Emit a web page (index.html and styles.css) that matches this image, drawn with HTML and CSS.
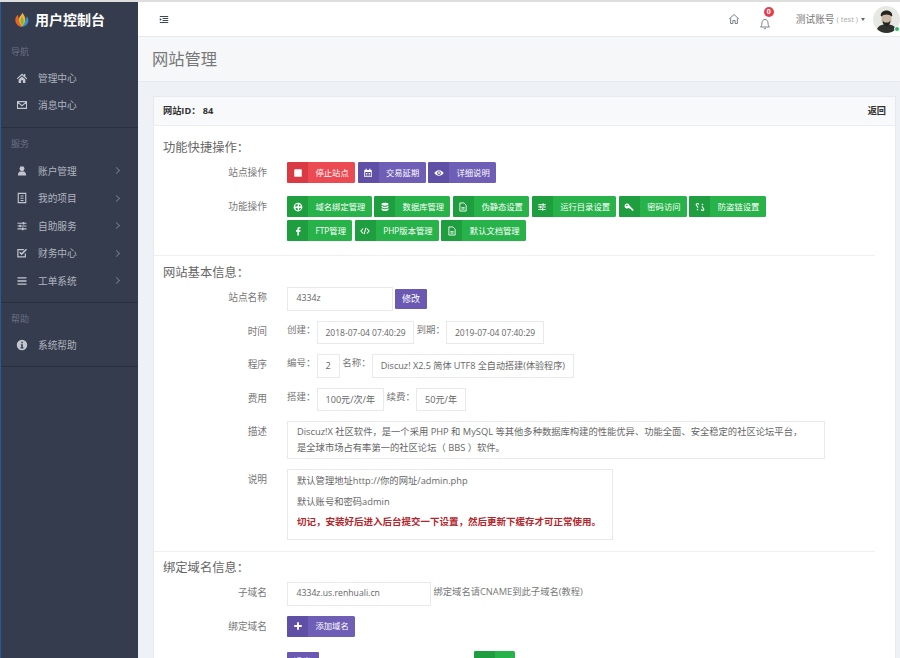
FILE: index.html
```html
<!DOCTYPE html>
<html lang="zh-CN">
<head>
    <meta charset="UTF-8">
    <title>网站管理</title>
    <link rel="stylesheet" href="styles.css">
</head>
<body>
    <svg class="sprite" xmlns="http://www.w3.org/2000/svg">
        <symbol id="i-home" viewBox="0 0 16 16"><path d="M8 2 1 8.500l1 1L8 4.200l6 5.300 1-1-2.500-2.300V2.500h-2v1.800zM3.500 10v4.500h3.300V11h2.400v3.500h3.300V10L8 6z"/></symbol>
        <symbol id="i-mail" viewBox="0 0 16 16"><path fill="none" stroke="currentColor" stroke-width="1.400" d="M2 3.500h12v9H2zM2.500 4.500 8 9l5.500-4.500"/></symbol>
        <symbol id="i-user" viewBox="0 0 16 16"><circle cx="8" cy="5" r="3.300"/><path d="M2.500 14c0-4 2-5.500 3-5.500h5c1 0 3 1.500 3 5.500z"/></symbol>
        <symbol id="i-book" viewBox="0 0 16 16"><path fill="none" stroke="currentColor" stroke-width="1.500" d="M3 1.800h10v12.400H3z"/><path d="M6 4.500h4V6H6zM6 7.500h4V9H6zM6 10.500h4V12H6z"/></symbol>
        <symbol id="i-sliders" viewBox="0 0 16 16"><path d="M2 3.500h12V5H2zM2 7.300h12v1.400H2zM2 11h12v1.500H2z"/><path d="M9 2.500h2V6H9zM4.500 6.300h2v3.500h-2zM8 10h2v3.500H8z"/></symbol>
        <symbol id="i-check" viewBox="0 0 16 16"><path fill="none" stroke="currentColor" stroke-width="1.600" d="M12.500 8.500v4.700h-10V3.500h8"/><path fill="none" stroke="currentColor" stroke-width="2" d="M5 7l2.500 2.500L14 3"/></symbol>
        <symbol id="i-bars" viewBox="0 0 16 16"><path d="M2 3h12v1.800H2zM2 7.100h12v1.800H2zM2 11.200h12V13H2z"/></symbol>
        <symbol id="i-info" viewBox="0 0 16 16"><path fill-rule="evenodd" d="M8 1a7 7 0 1 0 0 14A7 7 0 0 0 8 1zM7 3.500h2v2H7zM6.500 7H9v4h1v1.500H6V11h1V8.500h-.5z"/></symbol>
        <symbol id="i-stop" viewBox="0 0 16 16"><rect x="2" y="2" width="12" height="12" rx="1"/></symbol>
        <symbol id="i-cal" viewBox="0 0 16 16"><path fill-rule="evenodd" d="M4 1h2v2h4V1h2v2h2v11.500H2V3h2zM3.500 6.500V13h9V6.500z"/><path d="M5 8h2v1.500H5zM9 8h2v1.500H9zM5 10.500h2V12H5zM9 10.500h2V12H9z"/></symbol>
        <symbol id="i-eye" viewBox="0 0 16 16"><path fill-rule="evenodd" d="M8 3.500C4.500 3.500 2 6 .5 8 2 10 4.500 12.500 8 12.500s6-2.500 7.500-4.500C14 6 11.500 3.500 8 3.500zM8 5a3 3 0 1 1 0 6 3 3 0 0 1 0-6z"/><circle cx="8" cy="8" r="1.500"/></symbol>
        <symbol id="i-globe" viewBox="0 0 16 16"><path fill-rule="evenodd" d="M8 1a7 7 0 1 0 0 14A7 7 0 0 0 8 1zM4 4l3-1 1 2-2 2H3.500zM10 3.500l2.500 2-1 2-2.500-1zM4 9l3 .5 1 3-1.500 1-2-2zM10 9.500h3l-1.500 3-2 .5z"/></symbol>
        <symbol id="i-db" viewBox="0 0 16 16"><ellipse cx="8" cy="3.500" rx="5.500" ry="2.300"/><path d="M2.500 5.500c1 1.500 3 2 5.500 2s4.500-.5 5.500-2V8c-1 1.500-3 2-5.500 2s-4.500-.5-5.500-2zM2.500 9.500c1 1.500 3 2 5.500 2s4.500-.5 5.500-2v3c-1 1.500-3 2-5.500 2s-4.500-.5-5.500-2z"/></symbol>
        <symbol id="i-file" viewBox="0 0 16 16"><path fill="none" stroke="currentColor" stroke-width="1.400" d="M3 1.500h6.500L13 5v9.500H3z"/><path d="M5.500 8h5v1.300h-5zM5.500 10.500h5v1.300h-5z"/></symbol>
        <symbol id="i-key" viewBox="0 0 16 16"><path fill-rule="evenodd" d="M5 2.500a4 4 0 1 0 2.800 6.800L9.500 11H11v1.500h1.500V14H15v-2L8.700 5.700A4 4 0 0 0 5 2.500zM4.500 4.500a1.200 1.200 0 1 1 0 2.400 1.200 1.200 0 0 1 0-2.400z"/></symbol>
        <symbol id="i-link" viewBox="0 0 16 16"><path fill="none" stroke="currentColor" stroke-width="1.700" d="M6 4 4.500 2.500A2 2 0 0 0 2 5l3 4M10 12l1.500 1.500A2 2 0 0 0 14 11l-3-4M3 13l2-2M13 3l-2 2"/></symbol>
        <symbol id="i-fb" viewBox="0 0 16 16"><path d="M9.500 15V9h2.200l.3-2.500H9.500V5c0-.8.3-1.200 1.200-1.200H12V1.500c-.3 0-1-.1-1.800-.1C8.200 1.400 7 2.500 7 4.700v1.800H4.800V9H7v6z"/></symbol>
        <symbol id="i-code" viewBox="0 0 16 16"><path fill="none" stroke="currentColor" stroke-width="1.700" d="M5 4 1.500 8 5 12M11 4l3.500 4-3.500 4M9.500 3l-3 10"/></symbol>
        <symbol id="i-plus" viewBox="0 0 16 16"><path d="M6.500 2h3v4.500H14v3H9.500V14h-3V9.500H2v-3h4.500z"/></symbol>
    </svg>

    <div class="app">
        <aside class="sidebar">
            <div class="brand">
                <svg class="brand-logo" viewBox="0 0 20 20">
                    <path fill="#e8642b" d="M5 4C2 6 1 10 2 13c1 3 4 6 8 6-3-3-4-9-5-15z"/>
                    <path fill="#2f8fdc" d="M10 19c4 0 8-3 8-8 0-2-1-4-2-5-1 5-3 10-6 13z"/>
                    <path fill="#f2b134" d="M10 1c1 3-4 5-4 9 0 3 2 7 4 9 3-3 5-7 4-11-.5-3-3-5-4-7z"/>
                    <path fill="#7cb83f" d="M10 7c-2 2-2.500 5-1 8 .5 1 1 2 1.500 2.500 2-3 2.500-7-.5-10.500z"/>
                </svg>
                <span>用户控制台</span>
            </div>

            <section class="nav-group">
                <h4>导航</h4>
                <a class="nav-item"><svg><use href="#i-home"/></svg><span>管理中心</span></a>
                <a class="nav-item"><svg><use href="#i-mail"/></svg><span>消息中心</span></a>
            </section>
            <section class="nav-group">
                <h4>服务</h4>
                <a class="nav-item"><svg><use href="#i-user"/></svg><span>账户管理</span><i class="chev"></i></a>
                <a class="nav-item"><svg><use href="#i-book"/></svg><span>我的项目</span><i class="chev"></i></a>
                <a class="nav-item"><svg><use href="#i-sliders"/></svg><span>自助服务</span><i class="chev"></i></a>
                <a class="nav-item"><svg><use href="#i-check"/></svg><span>财务中心</span><i class="chev"></i></a>
                <a class="nav-item"><svg><use href="#i-bars"/></svg><span>工单系统</span><i class="chev"></i></a>
            </section>
            <section class="nav-group">
                <h4>帮助</h4>
                <a class="nav-item"><svg><use href="#i-info"/></svg><span>系统帮助</span></a>
            </section>
        </aside>

        <div class="main">
            <header class="topbar">
                <svg class="toggle" viewBox="0 0 12 10"><path d="M0 0h12v1.500H0zM0 8.500h12V10H0zM4 3h8v1.300H4zM4 5.700h8V7H4zM0 3l2.800 2L0 7z"/></svg>
                <div class="top-right">
                    <svg class="top-home" viewBox="0 0 16 16"><path fill="none" stroke="currentColor" stroke-width="1.200" d="M1.500 8 8 2l6.500 6M3.500 7v7h3v-4h3v4h3V7"/></svg>
                    <div class="bell">
                        <svg viewBox="0 0 16 16"><path fill="none" stroke="currentColor" stroke-width="1.200" d="M8 2C5.500 2 4 4 4 6.500c0 3-1 4.500-2 5.500h12c-1-1-2-2.500-2-5.500C12 4 10.500 2 8 2zM6.500 13.500c.3 1 2.700 1 3 0"/></svg>
                        <b class="badge">0</b>
                    </div>
                    <div class="account">测试账号<em>( test )</em><i class="caret"></i></div>
                    <div class="avatar">
                        <svg viewBox="0 0 28 28">
                            <rect width="28" height="28" fill="#e6e8e4"/>
                            <path fill="#2f3330" d="M3 28c1-7 5-9 11-9s10 2 11 9z"/>
                            <path fill="#c9b9a6" d="M9 9c0-5 10-5 10 0v6c0 3-3 5-5 5s-5-2-5-5z"/>
                            <path fill="#26241f" d="M8 10c0-7 12-7 12 0l-1 1c-1-3-9-3-10 0zM10 15c1 2 2 2 4 2s3 0 4-2c0 4-2 6-4 6s-4-2-4-6z"/>
                        </svg>
                        <i class="online"></i>
                    </div>
                </div>
            </header>

            <div class="page-title"><h1>网站管理</h1></div>

            <div class="content">
                <div class="card">
                    <div class="card-head">
                        <strong>网站ID： 84</strong>
                        <a>返回</a>
                    </div>

                    <section class="block">
                        <h3>功能快捷操作：</h3>
                        <div class="row spaced">
                            <label>站点操作</label>
                            <div class="controls">
                                <a class="btn red"><span class="ico"><svg><use href="#i-stop"/></svg></span>停止站点</a>
                                <a class="btn purple"><span class="ico"><svg><use href="#i-cal"/></svg></span>交易延期</a>
                                <a class="btn purple"><span class="ico"><svg><use href="#i-eye"/></svg></span>详细说明</a>
                            </div>
                        </div>
                        <div class="row">
                            <label>功能操作</label>
                            <div class="controls ops">
                                <a class="btn green"><span class="ico"><svg><use href="#i-globe"/></svg></span>域名绑定管理</a>
                                <a class="btn green"><span class="ico"><svg><use href="#i-db"/></svg></span>数据库管理</a>
                                <a class="btn green"><span class="ico"><svg><use href="#i-file"/></svg></span>伪静态设置</a>
                                <a class="btn green"><span class="ico"><svg><use href="#i-sliders"/></svg></span>运行目录设置</a>
                                <a class="btn green"><span class="ico"><svg><use href="#i-key"/></svg></span>密码访问</a>
                                <a class="btn green"><span class="ico"><svg><use href="#i-link"/></svg></span>防盗链设置</a>
                                <a class="btn green"><span class="ico"><svg><use href="#i-fb"/></svg></span>FTP管理</a>
                                <a class="btn green"><span class="ico"><svg><use href="#i-code"/></svg></span>PHP版本管理</a>
                                <a class="btn green"><span class="ico"><svg><use href="#i-file"/></svg></span>默认文档管理</a>
                            </div>
                        </div>
                    </section>

                    <section class="block">
                        <h3>网站基本信息：</h3>
                        <div class="row">
                            <label>站点名称</label>
                            <div class="controls">
                                <span class="field name">4334z</span>
                                <a class="btn-plain">修改</a>
                            </div>
                        </div>
                        <div class="row">
                            <label>时间</label>
                            <div class="controls">
                                <span class="tag">创建：</span><span class="field date">2018-07-04 07:40:29</span>
                                <span class="tag">到期：</span><span class="field date">2019-07-04 07:40:29</span>
                            </div>
                        </div>
                        <div class="row">
                            <label>程序</label>
                            <div class="controls">
                                <span class="tag">编号：</span><span class="field">2</span>
                                <span class="tag">名称：</span><span class="field">Discuz! X2.5 简体 UTF8 全自动搭建(体验程序)</span>
                            </div>
                        </div>
                        <div class="row">
                            <label>费用</label>
                            <div class="controls">
                                <span class="tag">搭建：</span><span class="field">100元/次/年</span>
                                <span class="tag">续费：</span><span class="field">50元/年</span>
                            </div>
                        </div>
                        <div class="row">
                            <label>描述</label>
                            <div class="text-box desc">Discuz!X 社区软件，是一个采用 PHP 和 MySQL 等其他多种数据库构建的性能优异、功能全面、安全稳定的社区论坛平台，<br>是全球市场占有率第一的社区论坛（ BBS ）软件。</div>
                        </div>
                        <div class="row">
                            <label>说明</label>
                            <div class="text-box note">
                                <p>默认管理地址http://你的网址/admin.php</p>
                                <p>默认账号和密码admin</p>
                                <p class="warn">切记，安装好后进入后台提交一下设置，然后更新下缓存才可正常使用。</p>
                            </div>
                        </div>
                    </section>

                    <section class="block">
                        <h3>绑定域名信息：</h3>
                        <div class="row">
                            <label>子域名</label>
                            <div class="controls">
                                <span class="field sub">4334z.us.renhuali.cn</span>
                                <span class="hint">绑定域名请CNAME到此子域名(教程)</span>
                            </div>
                        </div>
                        <div class="row spaced">
                            <label>绑定域名</label>
                            <div class="controls">
                                <a class="btn purple"><span class="ico"><svg><use href="#i-plus"/></svg></span>添加域名</a>
                            </div>
                        </div>
                        <div class="row">
                            <label></label>
                            <div class="controls cut">
                                <a class="btn-plain">退出</a>
                                <a class="btn green last"><span class="ico"></span>外链</a>
                            </div>
                        </div>
                    </section>
                </div>
            </div>
        </div>
    </div>
</body>
</html>
```

FILE: styles.css
```css
html, body {
    margin: 0;
    padding: 0;
    height: 100%;
    overflow: hidden;
    font-family: "Open Sans", "Noto Sans CJK SC", sans-serif;
    color: #666;
    background-color: #eef1f5;
}

.sprite {
    display: none;
}

.app {
    display: flex;
    height: 658px;
    box-sizing: border-box;
    border-top: 2px solid #dedede;
}

/* sidebar */
.sidebar {
    width: 137px;
    flex: none;
    background-color: #353c4e;
    border-left: 1px solid #2a5a94;
    color: #b0b4bf;
}

.brand {
    display: flex;
    align-items: center;
    height: 34px;
    padding-left: 13px;
    box-sizing: border-box;
    color: #fff;
    font-size: 14px;
    font-weight: bold;
}

.brand-logo {
    width: 16px;
    height: 17px;
    margin-right: 5px;
}

.nav-group {
    padding-bottom: 8px;
    border-bottom: 1px solid #2a3040;
}

.nav-group h4 {
    margin: 0;
    padding: 9px 0 6px 10px;
    font-size: 9px;
    line-height: 13px;
    font-weight: normal;
    color: #6a7084;
}

.nav-item {
    display: flex;
    align-items: center;
    height: 27.5px;
    padding-left: 15px;
    font-size: 9.7px;
}

.nav-group + .nav-group .nav-item {
    margin-top: 0;
    transform: translateY(1px);
}

.nav-item svg {
    width: 12px;
    height: 12px;
    margin-right: 10px;
    fill: #c3c6cf;
    color: #c3c6cf;
}

.chev {
    width: 4px;
    height: 4px;
    margin-left: auto;
    margin-right: 19px;
    border-top: 1px solid #70768a;
    border-right: 1px solid #70768a;
    transform: rotate(45deg);
}

/* top */
.main {
    flex: 1;
    min-width: 0;
    display: flex;
    flex-direction: column;
    overflow: hidden;
}

.topbar {
    display: flex;
    align-items: center;
    justify-content: space-between;
    height: 34px;
    padding-left: 21px;
    background-color: #fff;
    border-bottom: 1px solid #e6e9ee;
    flex: none;
}

.toggle {
    width: 10px;
    height: 7px;
    fill: #3d4656;
}

.top-right {
    display: flex;
    align-items: center;
}

.top-home {
    width: 12px;
    height: 12px;
    color: #6b7280;
    margin-right: 19px;
}

.bell {
    position: relative;
    width: 12px;
    height: 12px;
    color: #6b7280;
    margin-right: 25px;
}

.bell svg {
    width: 12px;
    height: 12px;
}

.badge {
    position: absolute;
    top: -6px;
    left: 5px;
    width: 10px;
    height: 10px;
    border-radius: 50%;
    background-color: #e2404e;
    color: #fff;
    font-size: 7px;
    line-height: 10px;
    text-align: center;
}

.account {
    display: flex;
    align-items: center;
    font-size: 9.7px;
    color: #777;
}

.account em {
    font-style: normal;
    font-size: 7.5px;
    color: #aaa;
    margin-left: 2px;
}

.caret {
    margin-left: 3px;
    border-top: 3px solid #666;
    border-left: 2.5px solid transparent;
    border-right: 2.5px solid transparent;
}

.avatar {
    position: relative;
    width: 27px;
    height: 27px;
    margin-left: 8px;
}

.avatar svg {
    width: 27px;
    height: 27px;
    border-radius: 50%;
    display: block;
}

.online {
    position: absolute;
    right: 0;
    bottom: 1px;
    width: 6px;
    height: 6px;
    border-radius: 50%;
    background-color: #36b56a;
    border: 1px solid #fff;
    box-sizing: border-box;
}

.page-title {
    height: 44px;
    flex: none;
    background-color: #f5f7f9;
    border-bottom: 1px solid #e6e9ee;
    padding-left: 14px;
    display: flex;
    align-items: center;
}

.page-title h1 {
    margin: 0 0 2px;
    font-size: 16.3px;
    font-weight: normal;
    color: #777;
}

/* card */
.content {
    padding: 14px 4px 0 15px;
}

.card {
    background-color: #fff;
    border: 1px solid #e6e9ee;
}

.card-head {
    display: flex;
    justify-content: space-between;
    align-items: center;
    height: 26px;
    padding: 0 9px 2px 9px;
    background-color: #f8f9fa;
    border-bottom: 1px solid #eceef1;
    font-size: 9.2px;
    color: #333;
}

.card-head a {
    font-weight: bold;
}

.block {
    margin-right: 20px;
    padding: 1px 0;
    border-bottom: 1px solid #eef0f3;
}

.block:first-of-type {
    padding: 6px 0 4px;
}

.block:last-child {
    padding: 0;
    border-bottom: none;
}

.block h3 {
    margin: 0 0 4px;
    padding: 6px 0 0 9px;
    font-size: 12.3px;
    line-height: 20px;
    font-weight: normal;
    color: #666;
}

.row {
    display: flex;
    align-items: flex-start;
    margin-bottom: 10px;
}

.row.spaced {
    margin-bottom: 13px;
}

.block:last-child .row.spaced {
    margin-bottom: 14.5px;
}

.row label {
    width: 113px;
    flex: none;
    margin-right: 20px;
    text-align: right;
    font-size: 9.7px;
    line-height: 21px;
    color: #777;
}

.controls {
    display: flex;
    flex-wrap: wrap;
    align-items: center;
    gap: 3px 2.5px;
    flex: 1;
}

.ops {
    flex: none;
    max-width: 500px;
}

.btn {
    display: inline-flex;
    align-items: center;
    box-sizing: border-box;
    height: 21px;
    padding: 0 6.3px 2px 0;
    border-radius: 1.5px;
    font-size: 8.3px;
    color: #fff;
    white-space: nowrap;
}

.ico {
    display: flex;
    align-items: center;
    justify-content: center;
    width: 21px;
    height: 21px;
    margin: 0 7.5px -2px 0;
    border-radius: 1.5px 0 0 1.5px;
}

.ico svg {
    width: 10px;
    height: 10px;
    fill: #fff;
    color: #fff;
}

.red { background-color: #ec4a53; }
.red .ico { background-color: #da3a43; }
.purple { background-color: #6e5eb5; }
.purple .ico { background-color: #5f4fa5; }
.green { background-color: #27b34a; }
.green .ico { background-color: #1f9e40; }

.btn-plain {
    display: inline-block;
    margin-left: -0.5px;
    padding: 0 7px;
    height: 20px;
    line-height: 20px;
    background-color: #6a58b3;
    color: #fff;
    font-size: 9px;
    border-radius: 1px;
}

.field {
    display: inline-block;
    height: 23.5px;
    padding: 0 8px;
    line-height: 21px;
    border: 1px solid #e7e9ec;
    box-sizing: border-box;
    font-size: 9.1px;
    color: #666;
    background-color: #fff;
    white-space: nowrap;
}

.field.name {
    width: 106px;
    padding-left: 8.5px;
    font-size: 8.8px;
}

.field.date {
    width: 97.5px;
    text-align: center;
    font-size: 8.5px;
}

.field.sub {
    width: 144px;
    padding-left: 8.5px;
    font-size: 8.7px;
}

.tag {
    width: 27px;
    font-size: 9.5px;
    color: #777;
    white-space: nowrap;
    align-self: flex-start;
    line-height: 18px;
}

.hint {
    font-size: 9.3px;
    color: #777;
    align-self: flex-start;
    line-height: 20px;
}

.text-box {
    border: 1px solid #e7e9ec;
    font-size: 9.3px;
    color: #666;
    box-sizing: border-box;
    padding: 1.5px 9px;
}

.desc {
    width: 538px;
    height: 38px;
    line-height: 16px;
}

.note {
    width: 326px;
    height: 71px;
    padding-top: 3px;
}

.note p {
    margin: 0 0 5.5px;
    line-height: 15px;
}

.note .warn {
    color: #b3262b;
    font-size: 9.5px;
    font-weight: bold;
}

.cut {
    gap: 0;
}

.btn.last {
    margin-left: 155.5px;
    padding-right: 0;
    width: 41px;
}

.btn.last .ico {
    margin-right: 2px;
}
```
